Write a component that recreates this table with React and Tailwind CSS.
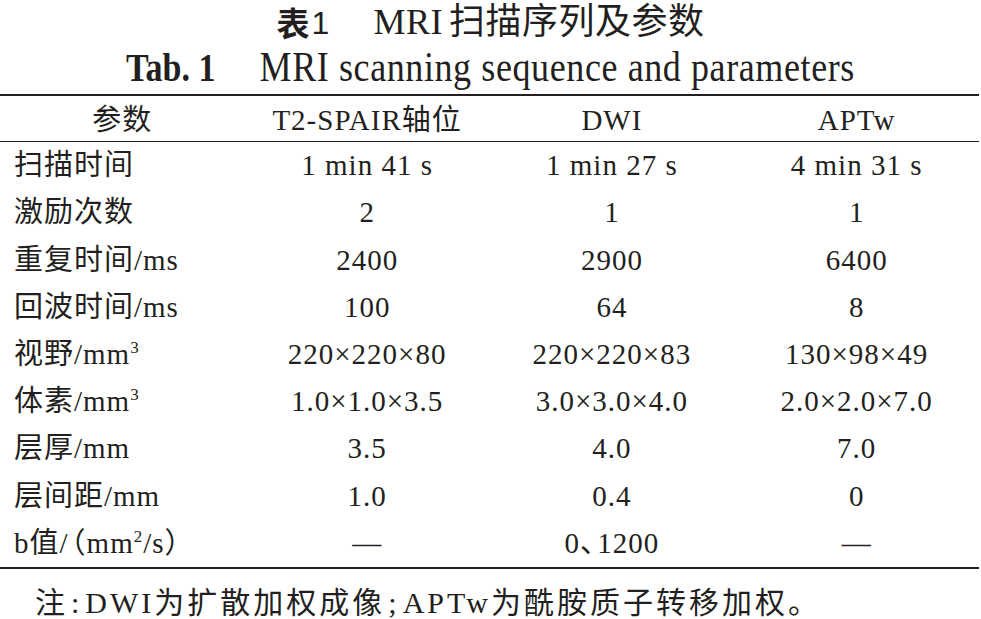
const rows = [
  { label: "扫描时间", values: ["1 min 41 s", "1 min 27 s", "4 min 31 s"] },
  { label: "激励次数", values: ["2", "1", "1"] },
  { label: "重复时间/ms", values: ["2400", "2900", "6400"] },
  { label: "回波时间/ms", values: ["100", "64", "8"] },
  { label: "视野/mm", sup: "3", values: ["220×220×80", "220×220×83", "130×98×49"] },
  { label: "体素/mm", sup: "3", values: ["1.0×1.0×3.5", "3.0×3.0×4.0", "2.0×2.0×7.0"] },
  { label: "层厚/mm", values: ["3.5", "4.0", "7.0"] },
  { label: "层间距/mm", values: ["1.0", "0.4", "0"] },
  {
    label: "b值/",
    paren: true,
    sup: "2",
    tail: "/s）",
    values: [
      "—",
      <>
        0<span className="-mr-[13px]">、</span>1200
      </>,
      "—",
    ],
  },
];

export default function App() {
  return (
    <div className="w-[981px] h-[619px] bg-white text-[#231f20] font-['Liberation_Serif','Noto_Sans_CJK_SC',serif] overflow-hidden">
      {/* captions */}
      <div className="h-[44px] pt-[2px] flex items-center justify-center text-[36px] leading-[1.2]">
        <span className="font-bold font-['Noto_Sans_CJK_SC',sans-serif] text-[33px]">表</span>
        <span className="font-['Liberation_Sans',sans-serif] text-[32px] ml-[2px]">1</span>
        <span className="ml-[44px] tracking-[0.5px]">MRI</span>
        <span className="ml-[6px] tracking-[0.5px]">扫描序列及参数</span>
      </div>
      <div className="h-[48px] flex items-center justify-center text-[36px] leading-[1.2] scale-y-[1.15]">
        <span className="font-bold text-[34px]">Tab. 1</span>
        <span className="ml-[44px] tracking-[0.6px]">MRI scanning sequence and parameters</span>
      </div>

      {/* table */}
      <div className="mt-[2px] border-t-[2.5px] border-b-[2.5px] border-[#231f20] w-[979px]">
        <div className="grid grid-cols-4 h-[46px] items-center pt-[3px] text-[29px] leading-[1.2] border-b-[1.5px] border-[#231f20] text-center tracking-[1px]">
          <div>参数</div>
          <div>T2-SPAIR轴位</div>
          <div>DWI</div>
          <div>APTw</div>
        </div>
        {rows.map((r) => (
          <div key={r.label} className="grid grid-cols-4 h-[47.2px] items-center text-[29px] leading-[1.2] tracking-[1px]">
            <div className="pl-[14px] whitespace-nowrap">
              {r.label}
              {r.paren && <span className="-ml-[12px]">（</span>}
              {r.paren && "mm"}
              {r.sup && <sup className="text-[17px] -top-[11px]">{r.sup}</sup>}
              {r.tail}
            </div>
            {r.values.map((v, i) => (
              <div key={i} className="text-center whitespace-nowrap">
                {v}
              </div>
            ))}
          </div>
        ))}
      </div>

      <div className="pl-[35px] pt-[16px] text-[30px] leading-[1.2] tracking-[3px] whitespace-nowrap">
        注<span className="mx-[3px]">:</span>DWI为扩散加权成像<span className="mx-[3px]">;</span>APTw为酰胺质子转移加权。
      </div>
    </div>
  );
}
